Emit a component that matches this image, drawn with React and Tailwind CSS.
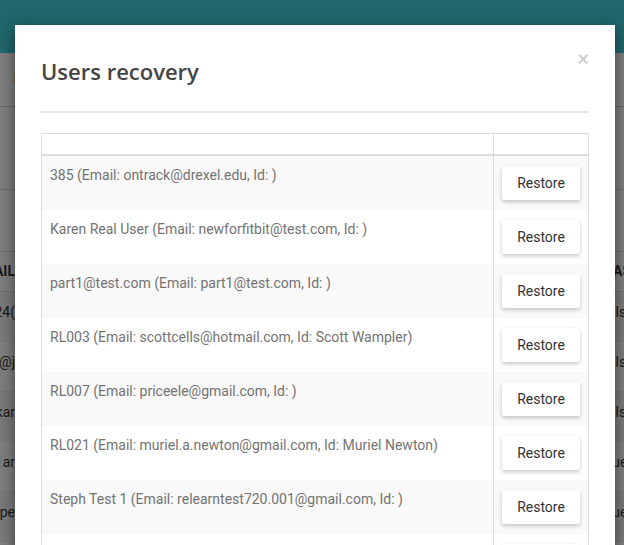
const users = [
  '385 (Email: ontrack@drexel.edu, Id: )',
  'Karen Real User (Email: newforfitbit@test.com, Id: )',
  'part1@test.com (Email: part1@test.com, Id: )',
  'RL003 (Email: scottcells@hotmail.com, Id: Scott Wampler)',
  'RL007 (Email: priceele@gmail.com, Id: )',
  'RL021 (Email: muriel.a.newton@gmail.com, Id: Muriel Newton)',
  'Steph Test 1 (Email: relearntest720.001@gmail.com, Id: )',
  'Steph Test 2 (Email: relearntest720.002@gmail.com, Id: )',
];

const bgRows = [
  ['xyz0124(', 'false'],
  ['peter@j', 'false'],
  ['mkar', 'false'],
  ['ann1ar', 'true'],
  ['lohnpe', 'true'],
];

function Background() {
  return (
    <div className="min-h-[545px] bg-white text-[14px] text-[#333] font-['Roboto',sans-serif]">
      <div className="h-[53px] bg-[#41ccd7]"></div>
      <div className="h-[54px] border-b border-[#ccc] flex items-center pl-[13px]">
        <span className="text-[20px] font-['Open_Sans',sans-serif]">Users</span>
      </div>
      <div className="h-[83px] border-b border-[#ddd]"></div>
      <div className="h-[61px]"></div>
      <div className="h-[41px] border-t border-b border-[#ddd] flex items-center font-bold">
        <div className="w-[15px] overflow-hidden flex justify-end whitespace-nowrap">EMAIL</div>
        <div className="flex-1"></div>
        <div className="w-[22px] overflow-hidden whitespace-nowrap pl-[1px]">HAS</div>
      </div>
      {bgRows.map(([left, right], i) => (
        <div
          key={i}
          className={`h-[50px] border-b border-[#eee] flex items-center pb-[8px] ${i % 2 === 0 ? 'bg-[#f7f7f7]' : 'bg-white'}`}
        >
          <div className="w-[15px] overflow-hidden flex justify-end whitespace-nowrap">{left}</div>
          <div className="flex-1"></div>
          <div className="w-[22px] overflow-hidden whitespace-nowrap pl-[1px]">{right}</div>
        </div>
      ))}
    </div>
  );
}

export default function App() {
  return (
    <div className="relative w-[624px] h-[545px] overflow-hidden">
      <Background />
      <div className="absolute inset-0 bg-black/50"></div>

      <div className="absolute left-[15px] top-[25px] w-[600px] h-[600px] bg-white shadow-[0_5px_15px_rgba(0,0,0,0.5)] px-[26px]">
        <button className="absolute left-[558px] top-[24px] w-[20px] h-[20px] flex items-center justify-center text-[20px] leading-none font-bold text-black/20 font-['Liberation_Sans',sans-serif]">
          ×
        </button>

        <h4 className="pt-[31px] h-[61px] leading-[30px] text-[22px] font-semibold text-[#444] font-['Open_Sans',sans-serif]">
          Users recovery
        </h4>
        <div className="mt-[25px] h-[2px] bg-[#e5e5e5]"></div>

        <div className="mt-[20px] border-t border-l border-r border-[#ddd] font-['Roboto',sans-serif]">
          <div className="flex h-[22px] border-b-2 border-[#ddd]">
            <div className="w-[452px] border-r border-[#ddd]"></div>
            <div className="flex-1"></div>
          </div>
          {users.map((u, i) => (
            <div key={i} className={`flex h-[54px] ${i % 2 === 0 ? 'bg-[#f9f9f9]' : 'bg-white'}`}>
              <div className="w-[452px] border-r border-[#ddd] pl-[8px] pt-[10px] text-[14px] leading-[18px] text-[#737373]">
                {u}
              </div>
              <div className="flex-1 px-[8px] pt-[10px]">
                <button className="w-[78px] h-[34px] bg-white rounded-[2px] text-[14px] text-[#333] shadow-[0_2px_4px_rgba(0,0,0,0.22)]">
                  Restore
                </button>
              </div>
            </div>
          ))}
        </div>
      </div>
    </div>
  );
}
